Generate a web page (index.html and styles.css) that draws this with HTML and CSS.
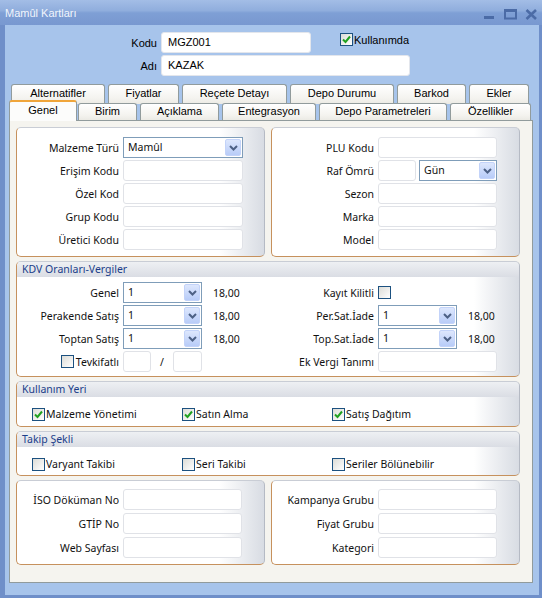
FILE: index.html
```html
<!DOCTYPE html>
<html lang="tr">
<head>
<meta charset="utf-8">
<title>Mamûl Kartları</title>
<link rel="stylesheet" href="styles.css">
</head>
<body>
<div class="window">
  <div class="titlebar">
    <span class="title">Mamûl Kartları</span>
    <svg class="winctl" width="56" height="25" viewBox="0 0 56 25">
      <rect x="2" y="16" width="10" height="3" fill="#4b6ba6"/>
      <rect x="23" y="10.5" width="11" height="8" fill="none" stroke="#4b6ba6" stroke-width="2"/>
      <rect x="22" y="9" width="13" height="3" fill="#4b6ba6"/>
      <path d="M44.5 10 L54 19 M54 10 L44.5 19" stroke="#4b6ba6" stroke-width="2.6" fill="none"/>
    </svg>
  </div>
  <div class="frame">
    <div class="head">
      <div class="hrow">
        <span class="hlabel">Kodu</span>
        <div class="hinput hw150">MGZ001</div>
        <div class="hcheck">
          <span class="cb"><svg width="11" height="11" viewBox="0 0 11 11"><path d="M2 5.5 L4.5 8 L9 2.5" fill="none" stroke="#21a121" stroke-width="2"/></svg></span>
          <span>Kullanımda</span>
        </div>
      </div>
      <div class="hrow">
        <span class="hlabel">Adı</span>
        <div class="hinput hw249">KAZAK</div>
      </div>
    </div>

    <div class="tabs">
      <div class="tabrow back">
        <div class="tab tw94">Alternatifler</div>
        <div class="tab tw71">Fiyatlar</div>
        <div class="tab tw105">Reçete Detayı</div>
        <div class="tab tw104">Depo Durumu</div>
        <div class="tab tw69">Barkod</div>
        <div class="tab tw60">Ekler</div>
      </div>
      <div class="tabrow front">
        <div class="tab sel tw68">Genel</div>
        <div class="tab tw59">Birim</div>
        <div class="tab tw79">Açıklama</div>
        <div class="tab tw94">Entegrasyon</div>
        <div class="tab tw128">Depo Parametreleri</div>
        <div class="tab tw81">Özellikler</div>
      </div>
    </div>

    <div class="panel">
      <div class="pair">
        <div class="gbox box1">
          <div class="rows">
            <div class="frow"><span class="lbl">Malzeme Türü</span>
              <div class="select w120"><span class="sv">Mamûl</span><span class="sbtn"><svg width="9" height="6" viewBox="0 0 9 6"><path d="M1 1 L4.5 4.5 L8 1" fill="none" stroke="#4d6185" stroke-width="2"/></svg></span></div>
            </div>
            <div class="frow"><span class="lbl">Erişim Kodu</span><div class="inp w120"></div></div>
            <div class="frow"><span class="lbl">Özel Kod</span><div class="inp w120"></div></div>
            <div class="frow"><span class="lbl">Grup Kodu</span><div class="inp w120"></div></div>
            <div class="frow"><span class="lbl">Üretici Kodu</span><div class="inp w120"></div></div>
          </div>
        </div>
        <div class="gbox box1">
          <div class="rows">
            <div class="frow"><span class="lbl">PLU Kodu</span><div class="inp w119"></div></div>
            <div class="frow"><span class="lbl">Raf Ömrü</span><div class="inp w38"></div>
              <div class="select w78 ml3"><span class="sv">Gün</span><span class="sbtn"><svg width="9" height="6" viewBox="0 0 9 6"><path d="M1 1 L4.5 4.5 L8 1" fill="none" stroke="#4d6185" stroke-width="2"/></svg></span></div>
            </div>
            <div class="frow"><span class="lbl">Sezon</span><div class="inp w119"></div></div>
            <div class="frow"><span class="lbl">Marka</span><div class="inp w119"></div></div>
            <div class="frow"><span class="lbl">Model</span><div class="inp w119"></div></div>
          </div>
        </div>
      </div>

      <div class="gbox kdv">
        <div class="ghead">KDV Oranları-Vergiler</div>
        <div class="kgrid">
          <div class="frow"><span class="lbl">Genel</span>
            <div class="select w79"><span class="sv">1</span><span class="sbtn"><svg width="9" height="6" viewBox="0 0 9 6"><path d="M1 1 L4.5 4.5 L8 1" fill="none" stroke="#4d6185" stroke-width="2"/></svg></span></div>
            <span class="val">18,00</span>
          </div>
          <div class="frow"><span class="lbl">Kayıt Kilitli</span><span class="cb"></span></div>

          <div class="frow"><span class="lbl">Perakende Satış</span>
            <div class="select w79"><span class="sv">1</span><span class="sbtn"><svg width="9" height="6" viewBox="0 0 9 6"><path d="M1 1 L4.5 4.5 L8 1" fill="none" stroke="#4d6185" stroke-width="2"/></svg></span></div>
            <span class="val">18,00</span>
          </div>
          <div class="frow"><span class="lbl">Per.Sat.İade</span>
            <div class="select w79"><span class="sv">1</span><span class="sbtn"><svg width="9" height="6" viewBox="0 0 9 6"><path d="M1 1 L4.5 4.5 L8 1" fill="none" stroke="#4d6185" stroke-width="2"/></svg></span></div>
            <span class="val">18,00</span>
          </div>

          <div class="frow"><span class="lbl">Toptan Satış</span>
            <div class="select w79"><span class="sv">1</span><span class="sbtn"><svg width="9" height="6" viewBox="0 0 9 6"><path d="M1 1 L4.5 4.5 L8 1" fill="none" stroke="#4d6185" stroke-width="2"/></svg></span></div>
            <span class="val">18,00</span>
          </div>
          <div class="frow"><span class="lbl">Top.Sat.İade</span>
            <div class="select w79"><span class="sv">1</span><span class="sbtn"><svg width="9" height="6" viewBox="0 0 9 6"><path d="M1 1 L4.5 4.5 L8 1" fill="none" stroke="#4d6185" stroke-width="2"/></svg></span></div>
            <span class="val">18,00</span>
          </div>

          <div class="frow"><span class="lbl lblcheck"><span class="cb"></span><span>Tevkifatlı</span></span>
            <div class="inp w28"></div><span class="slash">/</span><div class="inp w29"></div>
          </div>
          <div class="frow"><span class="lbl">Ek Vergi Tanımı</span><div class="inp w119"></div></div>
        </div>
      </div>

      <div class="gbox sect">
        <div class="ghead">Kullanım Yeri</div>
        <div class="cbrow">
          <div class="cbitem"><span class="cb"><svg width="11" height="11" viewBox="0 0 11 11"><path d="M2 5.5 L4.5 8 L9 2.5" fill="none" stroke="#21a121" stroke-width="2"/></svg></span><span>Malzeme Yönetimi</span></div>
          <div class="cbitem"><span class="cb"><svg width="11" height="11" viewBox="0 0 11 11"><path d="M2 5.5 L4.5 8 L9 2.5" fill="none" stroke="#21a121" stroke-width="2"/></svg></span><span>Satın Alma</span></div>
          <div class="cbitem"><span class="cb"><svg width="11" height="11" viewBox="0 0 11 11"><path d="M2 5.5 L4.5 8 L9 2.5" fill="none" stroke="#21a121" stroke-width="2"/></svg></span><span>Satış Dağıtım</span></div>
        </div>
      </div>

      <div class="gbox sect takip">
        <div class="ghead">Takip Şekli</div>
        <div class="cbrow">
          <div class="cbitem"><span class="cb"></span><span>Varyant Takibi</span></div>
          <div class="cbitem"><span class="cb"></span><span>Seri Takibi</span></div>
          <div class="cbitem"><span class="cb"></span><span>Seriler Bölünebilir</span></div>
        </div>
      </div>

      <div class="pair">
        <div class="gbox boxb">
          <div class="rows g3">
            <div class="frow"><span class="lbl">İSO Döküman No</span><div class="inp w119"></div></div>
            <div class="frow"><span class="lbl">GTİP No</span><div class="inp w119"></div></div>
            <div class="frow"><span class="lbl">Web Sayfası</span><div class="inp w119"></div></div>
          </div>
        </div>
        <div class="gbox boxb">
          <div class="rows g3">
            <div class="frow"><span class="lbl">Kampanya Grubu</span><div class="inp w119"></div></div>
            <div class="frow"><span class="lbl">Fiyat Grubu</span><div class="inp w119"></div></div>
            <div class="frow"><span class="lbl">Kategori</span><div class="inp w119"></div></div>
          </div>
        </div>
      </div>
    </div>
  </div>
</div>
</body>
</html>
```

FILE: styles.css
```css
* { box-sizing: border-box; }
html, body { margin: 0; padding: 0; }
body {
  width: 542px;
  height: 598px;
  overflow: hidden;
  font-family: "Liberation Sans", Arial, sans-serif;
  font-size: 11px;
  color: #000;
  background: #6f8fc9;
}
.window {
  width: 542px;
  height: 598px;
  display: flex;
  flex-direction: column;
  background: #6f8fc9;
}
.titlebar {
  height: 25px;
  flex: none;
  display: flex;
  align-items: center;
  justify-content: space-between;
  background: linear-gradient(#a3bde6, #90aedd 42%, #7e9fd5 52%, #7898d0);
}
.title {
  padding-left: 5px;
  color: #f1f5fc;
  font-size: 11px;
}
.winctl { margin-right: 4px; display: block; }

.frame {
  flex: 1;
  margin: 0 3px 3px 5px;
  background: #a7c4eb;
  padding: 0 6px 12px 4px;
  display: flex;
  flex-direction: column;
}

/* header fields */
.head {
  padding-top: 7px;
  display: flex;
  flex-direction: column;
  gap: 2px;
}
.hrow { display: flex; align-items: center; height: 21px; }
.hlabel { width: 148px; margin-right: 4px; text-align: right; }
.hinput {
  height: 21px;
  border: 1px solid #e3e6ec;
  border-radius: 3px;
  background: #fff;
  padding-left: 6px;
  line-height: 19px;
}
.hw150 { width: 150px; }
.hw249 { width: 249px; }
.hcheck {
  align-self: flex-start;
  margin-left: 29px;
  margin-top: 1px;
  display: flex;
  align-items: center;
  gap: 1px;
}

/* checkbox */
.cb {
  width: 13px;
  height: 13px;
  flex: none;
  border: 1px solid #1c5180;
  background: linear-gradient(135deg, #dcdcd7, #fff);
  display: inline-flex;
  align-items: center;
  justify-content: center;
}
.cb svg { display: block; }

/* tabs */
.tabs { margin-top: 8px; height: 36px; flex: none; }
.tabrow { display: flex; gap: 3px; padding-left: 2px; }
.tabrow.back { height: 20px; }
.tabrow.front { height: 17px; margin-top: -1px; align-items: flex-start; }
.tab {
  height: 100%;
  flex: none;
  border: 1px solid #919b9c;
  border-bottom: none;
  border-radius: 3px 3px 0 0;
  background: linear-gradient(#ffffff, #f4f3ef 70%, #ebeae4);
  text-align: center;
  white-space: nowrap;
}
.back .tab { line-height: 16px; }
.front .tab { line-height: 15px; }
.tab.sel {
  height: 21px;
  margin: -3px -2px 0;
  position: relative;
  z-index: 1;
  border-top: 2px solid #f0a53a;
  background: #fcfcfb;
  line-height: 17px;
}
.tw59 { width: 59px; }
.tw60 { width: 60px; }
.tw68 { width: 68px; }
.tw69 { width: 69px; }
.tw71 { width: 71px; }
.tw79 { width: 79px; }
.tw81 { width: 81px; }
.tw94 { width: 94px; }
.tw104 { width: 104px; }
.tw105 { width: 105px; }
.tw128 { width: 128px; }

/* panel */
.panel {
  flex: none;
  height: 463px;
  border: 1px solid #919b9c;
  background: #f5f4ef;
  padding: 6px 12px 0 6px;
  display: flex;
  flex-direction: column;
  gap: 4px;
  font-family: "Noto Sans", "DejaVu Sans", sans-serif;
  font-size: 10.5px;
  color: #111;
}
.pair { display: flex; gap: 6px; }
.pair > .gbox { flex: 1; }

.gbox {
  border: 1px solid;
  border-color: #c9cdd5 #b5bac4 #c6915d #c6915d;
  border-radius: 5px;
  background: linear-gradient(to right, #ffffff calc(100% - 45px), #d8dce3);
}
.box1 { height: 130px; padding-top: 9px; }
.boxb { height: 85px; padding-top: 8px; }
.kdv { height: 116px; }
.sect { height: 46px; }
.takip { height: 45px; }

.ghead {
  height: 15px;
  padding-left: 5px;
  line-height: 15px;
  color: #1b3e8a;
  background: linear-gradient(#eef0f3, #dadde4);
  border-radius: 4px 4px 0 0;
}

.rows { display: flex; flex-direction: column; gap: 2px; }
.rows.g3 { gap: 3px; }
.frow { display: flex; align-items: center; height: 21px; }
.lbl {
  width: 102px;
  flex: none;
  margin-right: 4px;
  text-align: right;
  white-space: nowrap;
}
.lblcheck {
  display: flex;
  justify-content: flex-end;
  align-items: center;
  gap: 2px;
}
.inp {
  height: 21px;
  flex: none;
  border: 1px solid #e0e2e7;
  border-radius: 3px;
  background: #fff;
}
.select {
  height: 21px;
  flex: none;
  display: flex;
  border: 1px solid #7f9db9;
  background: #fff;
}
.sv { flex: 1; padding-left: 4px; line-height: 19px; }
.sbtn {
  width: 16px;
  margin: 1px;
  border: 1px solid #c3d3f9;
  border-radius: 2px;
  background: linear-gradient(#dde7fd, #b8ccf8);
  display: flex;
  align-items: center;
  justify-content: center;
}
.sbtn svg { display: block; }
.ml3 { margin-left: 3px; }
.w28 { width: 28px; }
.w29 { width: 29px; }
.w38 { width: 38px; }
.w78 { width: 78px; }
.w79 { width: 79px; }
.w119 { width: 119px; }
.w120 { width: 120px; }
.val { margin-left: 11px; }
.slash { width: 22px; text-align: center; flex: none; }

.kgrid {
  display: grid;
  grid-template-columns: 255px 1fr;
  row-gap: 2px;
  padding-top: 5px;
}

.cbrow {
  display: grid;
  grid-template-columns: 150px 150px 150px;
  padding: 10px 0 0 15px;
}
.cbitem { display: flex; align-items: center; gap: 1px; }
```
